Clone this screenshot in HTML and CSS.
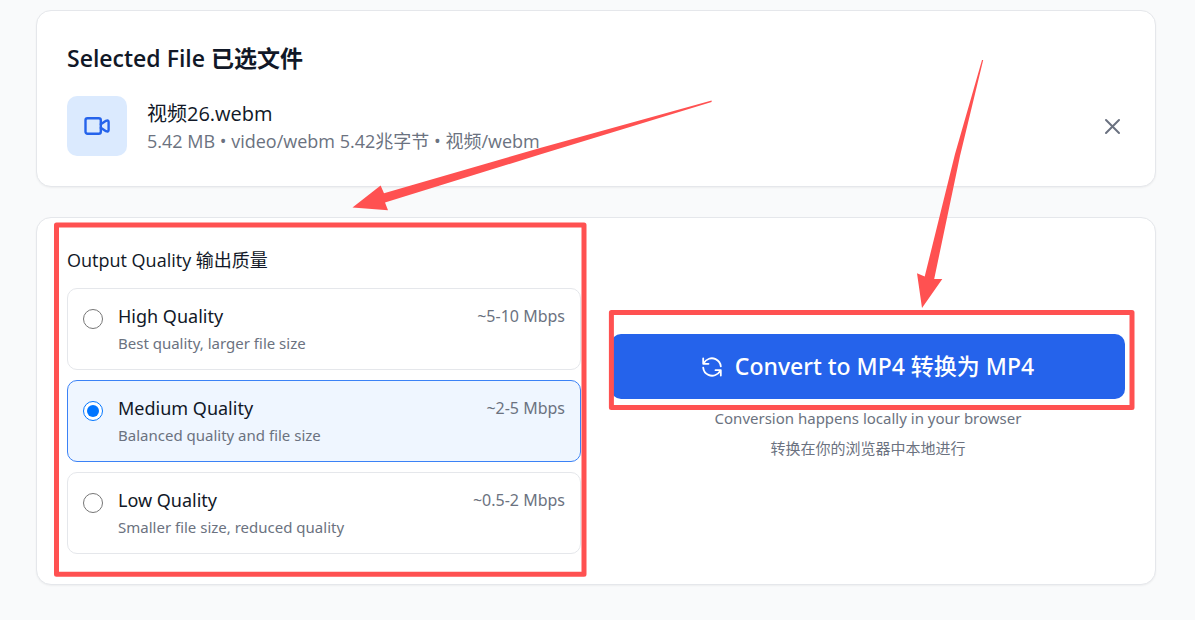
FILE: index.html
```html
<!DOCTYPE html>
<html lang="en">
<head>
<meta charset="utf-8">
<meta name="viewport" content="width=device-width, initial-scale=1">
<title>Convert to MP4</title>
<link rel="stylesheet" href="styles.css">
</head>
<body>
<main class="page">
  <section class="card">
    <h2 class="card-title">Selected File 已选文件</h2>
    <div class="file">
      <div class="file-icon">
        <svg width="30" height="30" viewBox="0 0 30 30" fill="none" stroke="currentColor" stroke-width="2.4" stroke-linejoin="round" stroke-linecap="round" aria-hidden="true">
          <rect x="3.5" y="7.2" width="15.3" height="15.6" rx="2"/>
          <path d="M18.8 13.2L24 9.8Q26.6 8.7 26.6 11V19Q26.6 21.3 24 20.2L18.8 16.8"/>
        </svg>
      </div>
      <div class="file-info">
        <p class="file-name">视频26.webm</p>
        <p class="file-meta">5.42 MB • video/webm 5.42兆字节 • 视频/webm</p>
      </div>
      <button class="remove" type="button" aria-label="Remove file">
        <svg width="25" height="25" viewBox="0 0 25 25" fill="none" stroke="currentColor" stroke-width="2" stroke-linecap="round" aria-hidden="true">
          <path d="M6 6L19 19M19 6L6 19"/>
        </svg>
      </button>
    </div>
  </section>

  <section class="card convert">
    <fieldset class="quality">
      <legend class="quality-title">Output Quality 输出质量</legend>
      <div class="options">
        <label class="option">
          <input class="option-radio" type="radio" name="quality">
          <span class="option-text"><span class="option-name">High Quality</span><span class="option-desc">Best quality, larger file size</span></span>
          <span class="option-rate">~5-10 Mbps</span>
        </label>
        <label class="option option-selected">
          <input class="option-radio" type="radio" name="quality" checked>
          <span class="option-text"><span class="option-name">Medium Quality</span><span class="option-desc">Balanced quality and file size</span></span>
          <span class="option-rate">~2-5 Mbps</span>
        </label>
        <label class="option">
          <input class="option-radio" type="radio" name="quality">
          <span class="option-text"><span class="option-name">Low Quality</span><span class="option-desc">Smaller file size, reduced quality</span></span>
          <span class="option-rate">~0.5-2 Mbps</span>
        </label>
      </div>
    </fieldset>
    <div class="action">
      <button class="convert-button" type="button">
        <svg width="20" height="20" viewBox="0 0 20 20" fill="none" stroke="currentColor" stroke-width="1.8" stroke-linecap="round" stroke-linejoin="round" aria-hidden="true">
          <path d="M1.2 1.5V6.8H6.5M1.6 6.4C4.2 1.6 9.5 .2 13.6 2.1C16.6 3.5 18.5 6.2 18.8 9.4"/>
          <path d="M18.8 18.5V13.2H13.5M18.4 13.6C15.8 18.4 10.5 19.8 6.4 17.9C3.4 16.5 1.5 13.8 1.2 10.6"/>
        </svg>
        <span>Convert to MP4 转换为 MP4</span>
      </button>
      <p class="note">Conversion happens locally in your browser<br>转换在你的浏览器中本地进行</p>
    </div>
  </section>
</main>

<svg class="annotations" width="1195" height="620" viewBox="0 0 1195 620" aria-hidden="true">
  <g fill="none" stroke="#ff5151" stroke-width="5" stroke-linejoin="round">
    <rect x="56.5" y="225" width="527.5" height="349.3"/>
    <rect x="611.4" y="312.6" width="520.6" height="95"/>
  </g>
  <g fill="#ff5151">
    <path d="M352.5 207.4L380.6 185.5L384 193.3L540 148L711.6 100.4V102L540 154.5L385 202.4L388 210.2Z"/>
    <path d="M922 308L917 273.3L924.7 276.6L955 154L982 60H983.2L960 156L934.2 279H942.3Z"/>
  </g>
</svg>
</body>
</html>
```
FILE: styles.css
```css
* {
  box-sizing: border-box;
}

body {
  margin: 0;
  background: #f9fafb;
  color: #111827;
  font-family: "Open Sans", "Noto Sans CJK SC", sans-serif;
}

p,
h2 {
  margin: 0;
}

button {
  font: inherit;
  border: 0;
  cursor: pointer;
}

.page {
  display: flex;
  flex-direction: column;
  gap: 30px;
  padding: 10px 39px 34px 36px;
}

.card {
  padding: 30px;
  background: #fff;
  border: 1px solid #e5e7eb;
  border-radius: 15px;
  box-shadow: 0 1px 2px rgba(0, 0, 0, 0.05);
}

.card-title {
  margin-bottom: 20px;
  font-size: 23px;
  font-weight: 600;
  line-height: 35px;
}

.file {
  display: flex;
  align-items: center;
  gap: 20px;
}

.file-icon {
  display: flex;
  align-items: center;
  justify-content: center;
  width: 60px;
  height: 60px;
  border-radius: 10px;
  background: #dbeafe;
  color: #2563eb;
}

.file-info {
  flex: 1;
  padding-top: 2px;
}

.file-name {
  font-size: 20px;
  line-height: 28px;
}

.file-meta {
  color: #6b7280;
  font-size: 18px;
  line-height: 26px;
}

.remove {
  display: flex;
  padding: 0;
  background: none;
  color: #6b7280;
}

.convert {
  display: grid;
  grid-template-columns: 1fr 1fr;
  gap: 30px;
}

.quality {
  min-width: 0;
  margin: 0;
  padding: 0;
  border: 0;
}

.quality-title {
  padding: 0;
  margin-bottom: 15px;
  font-size: 18px;
  line-height: 25px;
}

.options {
  display: flex;
  flex-direction: column;
  gap: 10px;
}

.option {
  display: flex;
  align-items: flex-start;
  gap: 15px;
  padding: 15px 15px 13px;
  border: 1px solid #e5e7eb;
  border-radius: 10px;
}

.option-selected {
  border-color: #3b82f6;
  background: #eff6ff;
}

.option-radio {
  width: 20px;
  height: 20px;
  margin: 5px 0 0;
}

.option-text {
  display: flex;
  flex: 1;
  flex-direction: column;
  gap: 2px;
}

.option-name {
  font-family: "Noto Sans", sans-serif;
  font-size: 18px;
  line-height: 25px;
}

.option-desc,
.option-rate {
  color: #6b7280;
  font-family: "Noto Sans", sans-serif;
  font-size: 15px;
  line-height: 25px;
}

.option-rate {
  font-size: 16px;
}

.action {
  display: flex;
  flex-direction: column;
  justify-content: center;
  gap: 4px;
  padding-bottom: 5px;
}

.convert-button {
  display: flex;
  align-items: center;
  justify-content: center;
  gap: 13px;
  padding: 15px;
  border-radius: 10px;
  background: #2563eb;
  color: #fff;
  font-family: "Noto Sans", "Noto Sans CJK SC", sans-serif;
  font-size: 23px;
  font-weight: 500;
  line-height: 35px;
}

.note {
  color: #6b7280;
  font-family: "Noto Sans", "Noto Sans CJK SC", sans-serif;
  font-size: 15px;
  line-height: 30px;
  text-align: center;
}

.annotations {
  position: absolute;
  top: 0;
  left: 0;
  pointer-events: none;
}
```
